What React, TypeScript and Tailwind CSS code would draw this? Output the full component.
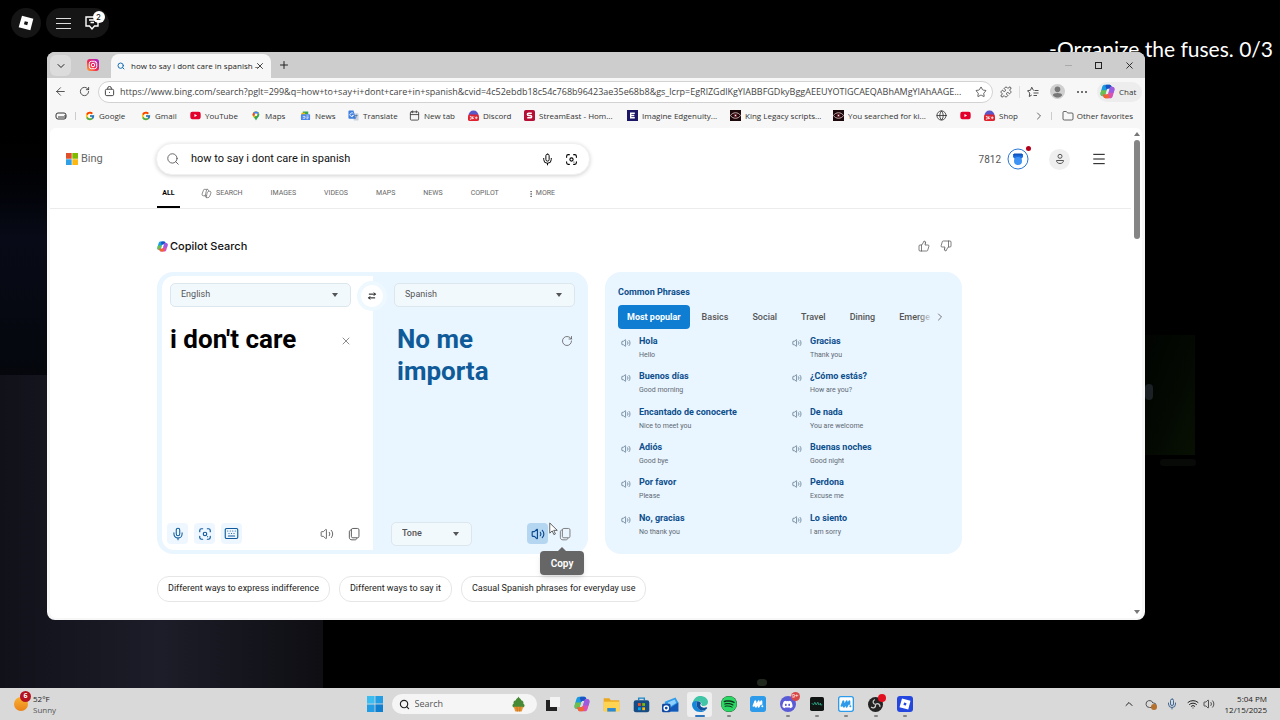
import { useState } from "react";
import type { ReactNode } from "react";
import { ArrowLeft, Calendar, ChevronDown, ChevronRight, ChevronUp, Cloud, Folder, Globe, Keyboard, Menu, Mic, MoreVertical, Plus, Puzzle, RotateCw, Search, Star, ThumbsDown, ThumbsUp, Volume2, Wifi, X } from "lucide-react";
import { FcGoogle } from "react-icons/fc";
import { FaDiscord, FaSpotify, FaYoutube } from "react-icons/fa";

const PHRASES = [
  ["Hola", "Hello"],
  ["Gracias", "Thank you"],
  ["Buenos días", "Good morning"],
  ["¿Cómo estás?", "How are you?"],
  ["Encantado de conocerte", "Nice to meet you"],
  ["De nada", "You are welcome"],
  ["Adiós", "Good bye"],
  ["Buenas noches", "Good night"],
  ["Por favor", "Please"],
  ["Perdona", "Excuse me"],
  ["No, gracias", "No thank you"],
  ["Lo siento", "I am sorry"],
];

const CATEGORIES = ["Most popular", "Basics", "Social", "Travel", "Dining", "Emerge"];

const SUGGESTIONS = [
  "Different ways to express indifference",
  "Different ways to say it",
  "Casual Spanish phrases for everyday use",
];

const PAGE_URL =
  "https://www.bing.com/search?pglt=299&q=how+to+say+i+dont+care+in+spanish&cvid=4c52ebdb18c54c768b96423ae35e68b8&gs_lcrp=EgRlZGdlKgYIABBFGDkyBggAEEUYOTIGCAEQABhAMgYIAhAAGE...";

function CopilotLogo({ className }: { className: string }) {
  return (
    <svg viewBox="1 1 22 22" className={className} aria-hidden="true">
      <path d="M8 2h7c2 0 2.500 1.500 3 3l.8 2.500h-5c-2 0-2.800 1-3.400 3L8.500 17c-.5 1.500-1.300 2-2.700 2-3.500 0-4.800-2-3.800-5.500l2.200-8C5 3 6 2 8 2Z" fill="#1a9be0" />
      <path d="M15 2c2 0 2.500 1.500 3 3l.8 2.500h-5c-1.600 0-2.400.7-3 2L9 4c.4-1.300 1-2 2.500-2Z" fill="#1b53c6" />
      <path d="M2 13.500 3 10h7.600l-2.100 7c-.5 1.500-1.300 2-2.700 2-3.500 0-4.800-2-3.800-5.500Z" fill="#6cc04a" />
      <path d="M16 22H9c-2 0-2.500-1.500-3-3l-.8-2.500h5c2 0 2.800-1 3.400-3L15.500 7c.5-1.500 1.300-2 2.700-2 3.500 0 4.800 2 3.800 5.500l-2.200 8C19 21 18 22 16 22Z" fill="#d951b4" />
      <path d="M9 22c-2 0-2.500-1.500-3-3l-.8-2.500h5c1.600 0 2.400-.7 3-2L15 20c-.4 1.300-1 2-2.500 2Z" fill="#f0642f" />
      <path d="M22 10.500 21 14h-7.600l2.100-7c.5-1.500 1.300-2 2.700-2 3.500 0 4.800 2 3.800 5.500Z" fill="#9b5de0" />
    </svg>
  );
}

function RobloxLogo({ className }: { className: string }) {
  return (
    <svg viewBox="0 0 24 24" className={className} aria-hidden="true">
      <path fillRule="evenodd" d="M6 1 23 5.500 18.500 23 1 18.500Zm4.200 8.200-1.300 4.700 4.900 1.300 1.300-4.700Z" fill="currentColor" />
    </svg>
  );
}

function InstagramLogo() {
  return (
    <svg viewBox="0 0 24 24" className="size-3" aria-hidden="true">
      <defs>
        <linearGradient id="insta" x1="0" y1="1" x2="1" y2="0">
          <stop offset="0" stopColor="#ffb13b" />
          <stop offset="0.45" stopColor="#f1244f" />
          <stop offset="1" stopColor="#a01fe0" />
        </linearGradient>
      </defs>
      <rect width="24" height="24" rx="6" fill="url(#insta)" />
      <rect x="4.500" y="4.500" width="15" height="15" rx="4.500" fill="none" stroke="#fff" strokeWidth="2" />
      <circle cx="12" cy="12" r="3.500" fill="none" stroke="#fff" strokeWidth="2" />
      <circle cx="16.500" cy="7.500" r="1.200" fill="#fff" />
    </svg>
  );
}

function VisualSearchIcon({ className }: { className: string }) {
  return (
    <svg viewBox="0 0 24 24" className={className} fill="none" stroke="currentColor" strokeWidth="2" strokeLinecap="round" aria-hidden="true">
      <path d="M3 8V6a3 3 0 0 1 3-3h2M16 3h2a3 3 0 0 1 3 3v2M21 16v2a3 3 0 0 1-3 3h-2M8 21H6a3 3 0 0 1-3-3v-2" />
      <circle cx="12" cy="12" r="3" />
      <path d="M16.500 16.500v.1" />
    </svg>
  );
}

function CopyIcon() {
  return (
    <svg viewBox="0 0 24 24" className="size-[14px]" fill="none" stroke="currentColor" strokeWidth="1.600" aria-hidden="true">
      <rect x="7.500" y="2.500" width="13" height="16" rx="2.500" />
      <path d="M7.500 5C5 5.200 4 6.500 4 8.500v9c0 3 1.500 4.500 4.500 4.500h5c2 0 3.300-1 3.500-3.500" />
    </svg>
  );
}

function SwapIcon() {
  return (
    <svg viewBox="0 0 16 16" className="size-[10px]" fill="none" stroke="currentColor" strokeWidth="1.500" aria-hidden="true">
      <path d="M3 5h10.500M11 2.500 13.500 5 11 7.500M13 11H2.500M5 8.500 2.500 11 5 13.500" />
    </svg>
  );
}

function MicrosoftSquares() {
  return (
    <svg viewBox="0 0 12 12" className="size-3" aria-hidden="true">
      <path d="M0 0h5.700v5.700H0z" fill="#e0502b" />
      <path d="M6.300 0H12v5.700H6.300z" fill="#7fba00" />
      <path d="M0 6.300h5.700V12H0z" fill="#2f9fe6" />
      <path d="M6.300 6.300H12V12H6.300z" fill="#fdb913" />
    </svg>
  );
}

function DiscordBadge() {
  return (
    <svg viewBox="0 0 24 24" className="size-[11px]" aria-hidden="true">
      <path d="M1 12a11 11 0 0 1 22 0Z" fill="#5b57c8" />
      <rect x="0" y="10" width="24" height="14" rx="4" fill="#e0222f" />
      <path d="M4 14h3v6H4M10 14v6m0-3 3-3m-3 3 3 3M18 14v6m-3-3h6" stroke="#fff" strokeWidth="1.800" fill="none" />
    </svg>
  );
}

function EyeIcon() {
  return (
    <svg viewBox="0 0 24 24" className="size-[11px]" aria-hidden="true">
      <rect width="24" height="24" fill="#1d090c" />
      <path d="M1 12C6 4 18 4 23 12 18 20 6 20 1 12Z" fill="none" stroke="#d9b9b9" strokeWidth="2" />
      <circle cx="12" cy="12" r="4" fill="#7a2630" />
      <circle cx="12" cy="12" r="1.500" fill="#fff" />
    </svg>
  );
}

const BOOKMARKS: { label: string; icon: ReactNode }[] = [
  { label: "Google", icon: <FcGoogle className="size-[10px]" /> },
  { label: "Gmail", icon: <FcGoogle className="size-[10px]" /> },
  { label: "YouTube", icon: <FaYoutube className="size-[11px] text-[#e3002b]" /> },
  {
    label: "Maps",
    icon: (
      <svg viewBox="0 0 24 24" className="size-[10px]" aria-hidden="true">
        <path d="M12 1a8 8 0 0 1 8 8c0 5-6 8-8 14C10 17 4 14 4 9a8 8 0 0 1 8-8Z" fill="#34a853" />
        <path d="M12 1a8 8 0 0 1 7 4.200L7 16C5 13.500 4 11.500 4 9a8 8 0 0 1 8-8Z" fill="#fbbc04" />
        <path d="M12 1a8 8 0 0 0-6 2.700L12 9l7-4A8 8 0 0 0 12 1Z" fill="#4285f4" />
        <path d="M6 3.700A8 8 0 0 0 4.500 12L12 9Z" fill="#ea4335" />
        <circle cx="12" cy="9" r="3" fill="#fff" />
      </svg>
    ),
  },
  {
    label: "News",
    icon: (
      <svg viewBox="0 0 24 24" className="size-[11px]" aria-hidden="true">
        <path d="M6 3h12v6H6z" fill="#34a853" />
        <path d="M3 6h8v5H3z" fill="#fbbc04" />
        <rect x="2" y="9" width="20" height="13" rx="2" fill="#4a86e8" />
        <path d="M6 14h5v4H6M14 13h5M14 16h5M14 19h4" stroke="#fff" strokeWidth="1.500" fill="none" />
      </svg>
    ),
  },
  {
    label: "Translate",
    icon: (
      <svg viewBox="0 0 24 24" className="size-[11px]" aria-hidden="true">
        <path d="M8 7h13a2 2 0 0 1 2 2v12a2 2 0 0 1-2 2h-8Z" fill="#c9d3df" />
        <path d="M3 1h9l5 18H3a2 2 0 0 1-2-2V3a2 2 0 0 1 2-2Z" fill="#3f7fe0" />
        <path d="M12 8.500A4 4 0 1 0 12 12H8.500" stroke="#fff" strokeWidth="1.800" fill="none" />
        <path d="M15 12h6M18 10v3c0 3-2 5-3 6" stroke="#55708f" strokeWidth="1.600" fill="none" />
      </svg>
    ),
  },
  { label: "New tab", icon: <Calendar className="size-[11px] text-[#444]" /> },
  { label: "Discord", icon: <DiscordBadge /> },
  {
    label: "StreamEast - Hom...",
    icon: (
      <svg viewBox="0 0 24 24" className="size-[11px]" aria-hidden="true">
        <rect width="24" height="24" rx="4" fill="#b50f35" />
        <path d="M17 7H10a2.500 2.500 0 0 0 0 5h4a2.500 2.500 0 0 1 0 5H7" fill="none" stroke="#fff" strokeWidth="3.500" />
      </svg>
    ),
  },
  {
    label: "Imagine Edgenuity...",
    icon: (
      <svg viewBox="0 0 24 24" className="size-[11px]" aria-hidden="true">
        <rect width="24" height="24" fill="#1c1666" />
        <path d="M17 7H8v10h9M8 12h8" fill="none" stroke="#fff" strokeWidth="3" />
      </svg>
    ),
  },
  { label: "King Legacy scripts...", icon: <EyeIcon /> },
  { label: "You searched for ki...", icon: <EyeIcon /> },
];

const BOOKMARK_SPOTS = [
  "w-[56px]", "w-[49px]", "w-[61px]", "w-[49px]", "w-[48px]", "w-[61px]",
  "w-[59px]", "w-[56px]", "w-[103px]", "w-[103px]", "w-[103px]", "w-[103px]",
];

function TitleBar() {
  return (
    <div className="flex h-[26px] items-end bg-[#cdcdcd] pl-[3px] text-[#222]">
      <button aria-label="Search tabs" className="mb-[2px] flex h-[21px] w-[21px] items-center justify-center rounded-md bg-[#dcdcdc]">
        <ChevronDown className="size-3" strokeWidth={2} />
      </button>
      <button aria-label="Instagram tab" className="mr-[3px] ml-[7px] flex h-[26px] w-[30px] items-center justify-center">
        <InstagramLogo />
      </button>
      <div className="flex h-6 w-[160px] items-center rounded-t-lg bg-[#f7f7f7] pr-[5px] pl-[6px]">
        <Search className="size-2 shrink-0 text-[#176fb5]" strokeWidth={3} />
        <span className="ml-[6px] min-w-0 flex-1 text-[8px] whitespace-nowrap">how to say i dont care in spanish –</span>
        <button aria-label="Close tab" className="flex size-3 items-center justify-center">
          <X className="size-[10px]" strokeWidth={2} />
        </button>
      </div>
      <button aria-label="New tab" className="ml-[6px] flex h-[26px] w-[13px] items-center justify-center">
        <Plus className="size-3 shrink-0" strokeWidth={2} />
      </button>
      <div className="ml-auto flex h-[26px] items-center pr-[1px]">
        <button aria-label="Minimize" className="flex w-[30px] justify-center text-[#aaa]">
          <span className="h-px w-[7px] bg-current" />
        </button>
        <button aria-label="Maximize" className="flex w-[31px] justify-center">
          <span className="size-[7px] border border-current" />
        </button>
        <button aria-label="Close" className="flex w-[30px] justify-center">
          <X className="size-[11px]" strokeWidth={2} />
        </button>
      </div>
    </div>
  );
}

function AddressRow() {
  return (
    <div className="flex h-[27px] items-center pr-[3px] pl-[7px] text-[#333]">
      <button aria-label="Back" className="flex w-3 justify-center">
        <ArrowLeft className="size-[13px] shrink-0" strokeWidth={1.5} />
      </button>
      <button aria-label="Reload" className="ml-3 flex w-3 justify-center">
        <RotateCw className="size-[11px]" strokeWidth={1.8} />
      </button>
      <div className="ml-2 flex h-[22px] min-w-0 flex-1 items-center rounded-full border border-[#d2d2d2] bg-white pr-[5px] pl-[5px]">
        <svg viewBox="0 0 24 24" className="size-[11px] shrink-0" fill="none" stroke="currentColor" strokeWidth="2" aria-hidden="true">
          <rect x="3" y="7" width="18" height="14" rx="3" />
          <path d="M8 7V5a4 4 0 0 1 8 0v2M12 13v2" />
        </svg>
        <input aria-label="Address" defaultValue={PAGE_URL} className="ml-[5px] min-w-0 flex-1 bg-transparent text-[9px] text-[#444] outline-none" />
        <button aria-label="Favorite this page">
          <Star className="size-3" strokeWidth={1.5} />
        </button>
      </div>
      <button aria-label="Extensions" className="ml-[7px]">
        <Puzzle className="size-3" strokeWidth={1.5} />
      </button>
      <span className="ml-[7px] h-3 w-px bg-[#ddd]" />
      <button aria-label="Favorites" className="ml-[7px]">
        <svg viewBox="0 0 24 24" className="size-3" fill="none" stroke="currentColor" strokeWidth="1.700" strokeLinejoin="round" aria-hidden="true">
          <path d="M13 9 9.500 2.500 7 8.500 1 9.500l4.500 4.500-1 7 5-3M15 9h8M13 14h10M13 19h7" />
        </svg>
      </button>
      <button aria-label="Profile" className="ml-[11px]">
        <svg viewBox="0 0 24 24" className="size-[15px]" aria-hidden="true">
          <circle cx="12" cy="12" r="12" fill="#cfcfcf" />
          <circle cx="12" cy="8.500" r="4.500" fill="#777" />
          <path d="M4.500 18c0-5 15-5 15 0-4 5-11 5-15 0Z" fill="#777" />
        </svg>
      </button>
      <button aria-label="Settings and more" className="ml-3 flex gap-[2px]">
        <span className="size-[2px] rounded-full bg-[#444]" />
        <span className="size-[2px] rounded-full bg-[#444]" />
        <span className="size-[2px] rounded-full bg-[#444]" />
      </button>
      <button className="ml-[10px] flex h-5 w-[45px] items-center gap-1 rounded-full bg-[#ededed] pl-[3px] text-[8px]">
        <CopilotLogo className="size-[15px] shrink-0" />
        Chat
      </button>
    </div>
  );
}

function BookmarksBar() {
  return (
    <nav className="flex h-[23px] items-center pr-3 pb-[2px] pl-2 text-[8px] text-[#333]">
      <svg viewBox="0 0 24 24" className="size-3 shrink-0" fill="none" stroke="currentColor" strokeWidth="2" aria-hidden="true">
        <rect x="2" y="6" width="20" height="12" rx="4" />
        <path d="M6 14h12M20 10v6" />
      </svg>
      <span className="mr-[9px] ml-2 h-2 w-px bg-[#ccc]" />
      {BOOKMARKS.map((mark, i) => (
        <a key={mark.label} href="#" className={`flex shrink-0 items-center gap-1 whitespace-nowrap ${BOOKMARK_SPOTS[i]}`}>
          <span className="shrink-0">{mark.icon}</span>
          {mark.label}
        </a>
      ))}
      <a href="#" aria-label="Website"><Globe className="size-[11px]" strokeWidth={1.8} /></a>
      <a href="#" aria-label="YouTube" className="ml-[13px]"><FaYoutube className="size-[11px] text-[#e3002b]" /></a>
      <a href="#" className="ml-[13px] flex items-center gap-1">
        <DiscordBadge />
        Shop
      </a>
      <button aria-label="More favorites" className="ml-auto">
        <ChevronRight className="size-3" strokeWidth={1.5} />
      </button>
      <span className="mr-[10px] ml-[6px] h-2 w-px bg-[#ccc]" />
      <button className="flex items-center gap-[3px] whitespace-nowrap">
        <Folder className="size-3" strokeWidth={1.5} />
        Other favorites
      </button>
    </nav>
  );
}

function BingHeader() {
  return (
    <header className="border-b border-[#ececec] pt-[15px]">
      <div className="flex h-8 items-center pr-6 pl-4">
        <a href="#" className="flex w-[90px] shrink-0 items-center gap-[3px] text-[11px] text-[#666]">
          <MicrosoftSquares />
          Bing
        </a>
        <form className="flex h-8 w-[434px] items-center rounded-full border border-[#f0f0f0] bg-white pr-[11px] pl-[9px] shadow-[0_1px_4px_rgba(0,0,0,0.18)]" onSubmit={(e) => e.preventDefault()}>
          <button aria-label="Search" className="text-[#555]">
            <Search className="size-[14px]" strokeWidth={1.5} />
          </button>
          <input aria-label="Search query" defaultValue="how to say i dont care in spanish" className="ml-[11px] min-w-0 flex-1 bg-transparent text-[11px] text-[#111] outline-none" />
          <button type="button" aria-label="Search by voice">
            <Mic className="size-[13px]" strokeWidth={1.8} />
          </button>
          <button type="button" aria-label="Search by image" className="ml-[11px]">
            <VisualSearchIcon className="size-[13px]" />
          </button>
        </form>
        <div className="ml-auto flex items-center text-[10px] text-[#555]">
          <span>7812</span>
          <button aria-label="Rewards" className="relative ml-[6px]">
            <svg viewBox="0 0 22 22" className="size-[22px]" aria-hidden="true">
              <circle cx="11" cy="11" r="10" fill="#fff" stroke="#2b77d4" />
              <path d="M6 6h10v3l-2 2H8L6 9Z" fill="#1c6fe0" />
              <circle cx="11" cy="13" r="4" fill="#3f93f5" />
              <path d="M7 5.500h8v2H7z" fill="#0f55bd" />
            </svg>
            <span className="absolute -top-[2px] -right-[2px] size-[5px] rounded-full bg-[#b3001b]" />
          </button>
          <button aria-label="Account" className="ml-5 flex size-[21px] items-center justify-center rounded-full bg-[#efefef]">
            <svg viewBox="0 0 12 12" className="size-3" fill="none" stroke="currentColor" aria-hidden="true">
              <circle cx="6" cy="3.300" r="2" />
              <path d="M2.500 7.500h7c0 4-7 4-7 0Z" />
            </svg>
          </button>
          <button aria-label="Menu" className="ml-[21px] text-[#111]">
            <Menu className="size-4" strokeWidth={1.5} />
          </button>
        </div>
      </div>
      <nav className="mt-1 ml-[107px] flex h-[29px] items-stretch text-[7px] text-[#666]">
        <a href="#" className="mr-[21px] flex w-[23px] items-center justify-center border-b-2 border-black pt-[2px] font-bold text-black">ALL</a>
        <a href="#" className="mr-7 flex items-center gap-1">
          <svg viewBox="0 0 24 24" className="size-[11px]" fill="none" stroke="currentColor" strokeWidth="1.600" aria-hidden="true">
            <path d="M7 3h7c2 0 2 2 3 4h2c3 0 3 3 2 6l-2 5c-1 2-2 3-4 3h-3c-2 0-2-2-3-4H5c-3 0-3-3-2-6l2-5c.5-2 1-3 2-3Z" />
            <path d="M14 3c-3 1-3 8-5 14M17 7c-5 0-5 14-5 14M9 17h4" />
          </svg>
          SEARCH
        </a>
        <a href="#" className="mr-7 flex items-center">IMAGES</a>
        <a href="#" className="mr-7 flex items-center">VIDEOS</a>
        <a href="#" className="mr-7 flex items-center">MAPS</a>
        <a href="#" className="mr-7 flex items-center">NEWS</a>
        <a href="#" className="mr-7 flex items-center">COPILOT</a>
        <button className="flex items-center gap-px">
          <MoreVertical className="size-2" strokeWidth={2.5} />
          MORE
        </button>
      </nav>
    </header>
  );
}

function Dropdown({ label, options, className }: { label: string; options: string[]; className: string }) {
  return (
    <div className={`relative flex h-6 items-center rounded-[5px] border border-[#dce6ed] bg-[#f2f9fd] text-[9px] text-[#555] ${className}`}>
      <select aria-label={label} className="h-full w-full appearance-none bg-transparent px-[10px] outline-none">
        {options.map((option) => <option key={option}>{option}</option>)}
      </select>
      <span className="pointer-events-none absolute right-3 border-x-3 border-t-4 border-x-transparent border-t-[#555]" />
    </div>
  );
}

function ToolButton({ label, className = "", children }: { label: string; className?: string; children: ReactNode }) {
  return (
    <button aria-label={label} className={`flex size-[21px] items-center justify-center rounded-[4px] ${className}`}>
      {children}
    </button>
  );
}

function Translator() {
  const [source, setSource] = useState("i don't care");

  return (
    <section className="relative flex h-[282px] w-[431px] shrink-0 rounded-2xl bg-[#e9f5ff] py-1 pl-[5px]">
      <div className="flex w-[211px] flex-col rounded-l-xl bg-white pt-[7px] pb-[6px]">
        <Dropdown label="Source language" options={["English", "Spanish", "French"]} className="ml-2 w-[181px]" />
        <div className="mt-4 flex flex-1 items-start pr-[21px] pl-2">
          <textarea
            aria-label="Text to translate"
            value={source}
            onChange={(e) => setSource(e.target.value)}
            className="h-full min-w-0 flex-1 resize-none bg-transparent text-[26px] leading-8 font-bold text-black outline-none"
          />
          <button aria-label="Clear text" className="mt-3 text-[#666]" onClick={() => setSource("")}>
            <X className="size-3" strokeWidth={1.5} />
          </button>
        </div>
        <div className="flex items-center gap-[6px] px-[5px] text-[#0e5a9c]">
          <ToolButton label="Speak" className="bg-[#eef7ff]"><Mic className="size-[14px]" strokeWidth={1.800} /></ToolButton>
          <ToolButton label="Translate image" className="bg-[#eef7ff]"><VisualSearchIcon className="size-[14px]" /></ToolButton>
          <ToolButton label="Keyboard" className="bg-[#eef7ff]"><Keyboard className="size-[15px]" strokeWidth={1.800} /></ToolButton>
          <ToolButton label="Listen to source" className="ml-auto text-[#555]"><Volume2 className="size-[14px]" strokeWidth={1.500} /></ToolButton>
          <ToolButton label="Copy source" className="mr-1 text-[#555]"><CopyIcon /></ToolButton>
        </div>
      </div>

      <div className="flex flex-1 flex-col pt-[7px] pb-[6px]">
        <Dropdown label="Target language" options={["Spanish", "English", "French"]} className="ml-[21px] w-[181px]" />
        <div className="mt-4 flex flex-1 items-start justify-between pr-[15px] pl-6">
          <p className="w-[120px] text-[26px] leading-8 font-bold text-[#0f5a98]">No me importa</p>
          <button aria-label="Regenerate" className="mt-3 text-[#555]">
            <RotateCw className="size-3" strokeWidth={1.5} />
          </button>
        </div>
        <div className="flex h-[21px] items-center pr-[13px] pl-[18px]">
          <Dropdown label="Tone" options={["Tone", "Casual", "Formal"]} className="w-[81px] font-medium" />
          <ToolButton label="Listen to translation" className="ml-auto bg-[#b5d6f1] text-[#0b4a91]"><Volume2 className="size-[14px]" strokeWidth={2} /></ToolButton>
          <div className="relative ml-[6px]">
            <ToolButton label="Copy" className="text-[#777]"><CopyIcon /></ToolButton>
            <div role="tooltip" className="absolute top-[28px] -left-[14px] z-10 flex h-6 w-[44px] items-center justify-center rounded-[4px] bg-[#666] text-[10px] font-semibold text-white shadow-md">
              Copy
              <span className="absolute -top-1 border-x-4 border-b-4 border-x-transparent border-b-[#666]" />
            </div>
          </div>
        </div>
      </div>

      {/* swap button straddles the two panes */}
      <button aria-label="Swap languages" className="absolute top-[9px] left-[200px] flex size-[30px] items-center justify-center rounded-full border-4 border-[#eef8ff] bg-white text-black">
        <SwapIcon />
      </button>

      <svg viewBox="0 0 12 18" className="absolute top-[250px] left-[392px] h-[14px] w-[9px]" aria-hidden="true">
        <path d="M1 1v13.500l3.300-3 2.200 5 2-.9-2.200-4.800H11Z" fill="#fff" stroke="#333" />
      </svg>
    </section>
  );
}

function CommonPhrases() {
  const [active, setActive] = useState("Most popular");

  return (
    <section className="flex h-[282px] w-[357px] shrink-0 flex-col rounded-2xl bg-[#e9f5ff] pt-[13px] pl-[13px]">
      <h3 className="text-[9px] leading-[14px] font-bold text-[#0d4f8c]">Common Phrases</h3>
      <div className="mt-[6px] flex items-center">
        <div className="relative flex w-[315px] overflow-hidden text-[9px] font-medium text-[#555]">
          {CATEGORIES.map((category) => (
            <button
              key={category}
              onClick={() => setActive(category)}
              className={category === active ? "h-6 shrink-0 rounded-[4px] bg-[#0f7dd1] px-[9px] pt-px font-bold text-white" : "h-6 shrink-0 px-3 pt-px"}
            >
              {category}
            </button>
          ))}
          <span className="pointer-events-none absolute top-0 right-0 h-full w-4 bg-linear-to-r from-transparent to-[#e9f5ff]" />
        </div>
        <button aria-label="Next categories" className="ml-px text-[#666]">
          <ChevronRight className="size-3" strokeWidth={1.800} />
        </button>
      </div>
      <ul className="mt-[5px] grid h-[212px] grid-cols-[171px_1fr] grid-rows-6">
        {PHRASES.map(([phrase, meaning]) => (
          <li key={phrase} className="flex items-start pl-[3px]">
            <button aria-label={`Listen to ${phrase}`} className="mt-1 mr-2 text-[#556f85]">
              <Volume2 className="size-[10px]" strokeWidth={1.800} />
            </button>
            <div>
              <p className="text-[9px] leading-[14px] font-bold text-[#0d4f8c]">{phrase}</p>
              <p className="mt-px text-[7px] leading-3 text-[#5f6a73]">{meaning}</p>
            </div>
          </li>
        ))}
      </ul>
    </section>
  );
}

function BrowserWindow() {
  return (
    <div className="z-10 mr-[135px] ml-[47px] overflow-hidden rounded-lg bg-[#f7f7f7] font-['Open_Sans',sans-serif]">
      <TitleBar />
      <AddressRow />
      <BookmarksBar />
      <div className="mr-[3px] mb-[2px] ml-[3px] flex overflow-hidden rounded-md bg-white font-['Roboto',sans-serif]">
        <div className="min-w-0 flex-1">
          <BingHeader />
          <main className="pt-[27px] pb-4 pl-[107px]">
            <div className="flex h-5 w-[795px] items-center">
              <CopilotLogo className="size-[11px]" />
              <h2 className="ml-[2px] font-['Inter',sans-serif] text-[11px] font-medium text-[#111]">Copilot Search</h2>
              <button aria-label="Like" className="ml-auto text-[#555]"><ThumbsUp className="size-3" strokeWidth={1.500} /></button>
              <button aria-label="Dislike" className="ml-[10px] text-[#555]"><ThumbsDown className="size-3" strokeWidth={1.500} /></button>
            </div>
            <div className="mt-4 flex gap-[17px]">
              <Translator />
              <CommonPhrases />
            </div>
            <div className="mt-[22px] flex gap-[9px] text-[9px] text-[#222]">
              {SUGGESTIONS.map((text) => (
                <button key={text} className="h-[26px] rounded-xl border border-[#e6e6e6] px-[10px] whitespace-nowrap">{text}</button>
              ))}
            </div>
          </main>
        </div>
        <div className="flex w-[11px] flex-col items-center justify-between pt-1 pb-1">
          <div className="flex flex-col items-center gap-1">
            <span className="border-x-3 border-b-4 border-x-transparent border-b-[#777]" />
            <span className="h-[99px] w-[6px] rounded-full bg-[#858585]" />
          </div>
          <span className="border-x-3 border-t-4 border-x-transparent border-t-[#777]" />
        </div>
      </div>
    </div>
  );
}

function TaskIcon({ label, running, active, children }: { label: string; running?: boolean; active?: boolean; children: ReactNode }) {
  return (
    <button aria-label={label} className="relative flex h-8 min-w-[29px] items-center justify-center">
      <span className={active ? "flex size-[25px] items-center justify-center rounded-[3px] bg-[#efefef]" : "flex"}>{children}</span>
      {running && <span className={active ? "absolute bottom-[3px] h-[2px] w-[10px] rounded-full bg-[#2f75bd]" : "absolute bottom-[3px] h-[2px] w-1 rounded-full bg-[#858585]"} />}
    </button>
  );
}

function MedalApp({ light }: { light?: boolean }) {
  return (
    <svg viewBox="0 0 24 24" className="size-4" aria-hidden="true">
      <rect x="1" y="1" width="22" height="22" rx="3" fill={light ? "#fff" : "#2d9bea"} stroke="#2d9bea" strokeWidth="2" />
      <path d="m5 16 3-8 1 8 4-8 0 8 4-8v5" fill="none" stroke={light ? "#2d9bea" : "#fff"} strokeWidth="3" strokeLinejoin="round" />
      <circle cx="18.500" cy="15.500" r="1.500" fill={light ? "#2d9bea" : "#fff"} />
    </svg>
  );
}

function Taskbar() {
  return (
    <footer className="z-10 grid h-8 grid-cols-[1fr_auto_1fr] items-center bg-[#d9d9d9] font-['Open_Sans',sans-serif] text-[#222]">
      <button className="flex items-center pl-[14px] text-left text-[8px]">
        <span className="relative mr-[5px] size-[14px] rounded-full bg-linear-to-b from-[#f9b233] to-[#e98216]">
          <span className="absolute -top-[6px] left-[6px] flex size-[11px] items-center justify-center rounded-full bg-[#b5121f] text-[7px] font-bold text-white">6</span>
        </span>
        <span className="leading-[11px]">52°F<br /><span className="text-[#555]">Sunny</span></span>
      </button>
      <div className="flex items-center">
        <TaskIcon label="Start">
          <svg viewBox="0 0 16 16" className="size-4" aria-hidden="true">
            <path d="M0 0h7.600v7.600H0z" fill="#3cbdf0" />
            <path d="M8.400 0H16v7.600H8.400zM0 8.400h7.600V16H0z" fill="#239de3" />
            <path d="M8.400 8.400H16V16H8.400z" fill="#0f7fd0" />
          </svg>
        </TaskIcon>
        <label className="mx-[2px] flex h-5 w-[145px] items-center rounded-full bg-[#f5f5f5] pr-3 pl-[7px]">
          <Search className="size-[11px] shrink-0" strokeWidth={2.5} />
          <input type="search" placeholder="Search" className="ml-[5px] min-w-0 flex-1 bg-transparent text-[9px] outline-none placeholder:text-[#555]" />
          <svg viewBox="0 0 24 30" className="h-4 w-[13px] shrink-0" aria-hidden="true">
            <path d="M12 1c1 4 5 4 5 7 4 1 5 4 4 6 3 2 3 5 1 7H2c-2-2-2-5 1-7-1-3 0-5 4-6 0-3 4-3 5-7Z" fill="#468a35" />
            <path d="M3 20h18l-3 9H6Z" fill="#e79231" />
            <path d="m9 20 1 9M15 20l-1 9" stroke="#a95a18" />
          </svg>
        </label>
        <div className="grid w-[381px] grid-cols-13">
          <TaskIcon label="Task view">
            <svg viewBox="0 0 16 16" className="size-4" aria-hidden="true">
              <path d="M5 1h10v10H5z" fill="#f3f3f3" />
              <path d="M1 4h4v7h7v4H1z" fill="#222" />
            </svg>
          </TaskIcon>
          <TaskIcon label="Copilot"><CopilotLogo className="size-4" /></TaskIcon>
          <TaskIcon label="File Explorer">
            <svg viewBox="0 0 24 24" className="size-[17px]" aria-hidden="true">
              <path d="M1 3h8l2 3h12v15H1Z" fill="#e9a820" />
              <path d="M1 8h22v14H1Z" fill="#ffd352" />
              <path d="M6 17h12v5H6Z" fill="#2a8ad8" />
            </svg>
          </TaskIcon>
          <TaskIcon label="Microsoft Store">
            <svg viewBox="0 0 24 24" className="size-[17px]" aria-hidden="true">
              <path d="M8 6V3h8v3" fill="none" stroke="#1d87c9" strokeWidth="2" />
              <rect x="1" y="6" width="22" height="17" rx="3" fill="#164c86" />
              <path d="M7 10h4v4H7z" fill="#f25022" />
              <path d="M13 10h4v4h-4z" fill="#7fba00" />
              <path d="M7 16h4v4H7z" fill="#00a4ef" />
              <path d="M13 16h4v4h-4z" fill="#ffb900" />
            </svg>
          </TaskIcon>
          <TaskIcon label="Outlook">
            <svg viewBox="0 0 24 24" className="size-[17px]" aria-hidden="true">
              <path d="M4 8 19 2l4 7v13H4Z" fill="#2f9bea" />
              <path d="m4 22 19-13v13Z" fill="#1459b7" />
              <path d="m8 9 10-4 2 5-9 5Z" fill="#8fd0ff" />
              <rect x="0" y="11" width="12" height="12" rx="2" fill="#124aa3" />
              <circle cx="6" cy="17" r="3" fill="none" stroke="#fff" strokeWidth="2" />
            </svg>
          </TaskIcon>
          <TaskIcon label="Edge" running active>
            <svg viewBox="0 0 24 24" className="size-4" aria-hidden="true">
              <path d="M1 11C2 4 7 0 12 0c7 0 12 4 12 9 0 4-3 6-7 6-2 0-3-1-3-2 1-4-3-6-6-5-4 0-6 2-7 3Z" fill="#40c5a6" />
              <path d="M0 12c1-4 5-5 8-4-3 5 0 12 6 14 3 0 6-1 8-3-3 4-6 5-10 5C5 24 0 19 0 12Z" fill="#1687d8" />
              <path d="M8 8c4 0 6 2 6 5-2 2 2 5 8 4l1 1c-3 4-6 4-9 4-6-2-9-9-6-14Z" fill="#0f4f9c" />
              <path d="M14 10c1 1-1 3 0 4s3 2 6 1v2c-6 1-10-3-6-7Z" fill="#eee" />
            </svg>
          </TaskIcon>
          <TaskIcon label="Spotify" running><span className="rounded-full bg-[#10351c]"><FaSpotify className="size-4 text-[#2bd865]" /></span></TaskIcon>
          <TaskIcon label="Medal"><MedalApp /></TaskIcon>
          <TaskIcon label="Discord" running>
            <span className="relative flex size-4 items-center justify-center rounded-full bg-[#5a5bd6]">
              <FaDiscord className="size-[11px] text-white" />
              <span className="absolute -top-1 -right-1 flex size-[9px] items-center justify-center rounded-full bg-[#d94848] text-[6px] text-white">9+</span>
            </span>
          </TaskIcon>
          <TaskIcon label="Audio mixer" running>
            <svg viewBox="0 0 16 16" className="size-[14px]" aria-hidden="true">
              <rect width="16" height="16" rx="2" fill="#101514" />
              <path d="m2 7 2 2 1.500-3L7 9l2-3 1 3 2-2v2h2" fill="none" stroke="#2fa98a" />
            </svg>
          </TaskIcon>
          <TaskIcon label="Medal clip" running><MedalApp light /></TaskIcon>
          <TaskIcon label="OBS Studio" running>
            <span className="relative flex">
              <svg viewBox="0 0 24 24" className="size-[15px]" aria-hidden="true">
                <circle cx="12" cy="12" r="12" fill="#232323" />
                <path d="M12 12c-5-1-5-6-1-8M12 12c1 5-4 7-7 4M12 12c4-3 8 0 7 4" fill="none" stroke="#ccc" strokeWidth="2" />
              </svg>
              <span className="absolute -top-[3px] -right-[3px] size-2 rounded-full bg-[#e3101f]" />
            </span>
          </TaskIcon>
          <TaskIcon label="Roblox" running>
            <span className="flex size-4 items-center justify-center rounded-[3px] bg-[#2447e0] text-white"><RobloxLogo className="size-3" /></span>
          </TaskIcon>
        </div>
      </div>
      <div className="flex items-center justify-end pr-[13px]">
        <button aria-label="Show hidden icons"><ChevronUp className="size-3" /></button>
        <span className="relative ml-[10px]">
          <Cloud className="size-3 text-[#555]" />
          <span className="absolute right-0 bottom-0 size-[6px] rounded-full bg-[#b5702b]" />
        </span>
        <Mic className="ml-[9px] size-3 text-[#3f6796]" />
        <Wifi className="ml-[9px] size-3" />
        <Volume2 className="ml-1 size-3" strokeWidth={1.500} />
        <time className="ml-[10px] text-right text-[8px] leading-[11px] whitespace-nowrap">5:04 PM<br />12/15/2025</time>
      </div>
    </footer>
  );
}

function GameBackdrop() {
  return (
    <div className="absolute inset-0" aria-hidden="true">
      <div className="absolute top-[100px] left-0 h-[275px] w-[60px] bg-linear-to-b from-black via-[#080b17] to-[#05070d]" />
      <div className="absolute top-[375px] bottom-8 left-0 w-[323px] bg-linear-to-r from-[#101119] via-[#1d1d29] to-[#0e0e13]" />
      <div className="absolute top-[335px] left-[1145px] h-[120px] w-[50px] bg-linear-to-br from-[#010401] to-[#081003]" />
      <span className="absolute top-[384px] left-[1145px] h-4 w-2 rounded-full bg-[#1b2124]" />
      <span className="absolute top-[459px] left-[1160px] h-[7px] w-9 rounded-full bg-[#080a08]" />
      <span className="absolute bottom-[34px] left-[757px] h-[7px] w-[10px] rounded-full bg-[#20271c]" />
    </div>
  );
}

export default function App() {
  return (
    <div className="relative flex min-h-screen flex-col overflow-hidden bg-black">
      <GameBackdrop />
      <div className="z-10 flex h-[52px] items-start gap-[5px] pt-2 pl-[11px] text-white">
        <button aria-label="Roblox menu" className="flex size-[30px] items-center justify-center rounded-full bg-[#151515]">
          <RobloxLogo className="size-4" />
        </button>
        <div className="flex h-[30px] w-[63px] items-center justify-center gap-[13px] rounded-full bg-[#151515]">
          <button aria-label="Open menu" className="flex w-[15px] flex-col gap-1">
            <span className="h-px bg-[#ddd]" />
            <span className="h-px bg-[#ddd]" />
            <span className="h-px bg-[#ddd]" />
          </button>
          <button aria-label="Chat" className="relative">
            <svg viewBox="0 0 16 16" className="size-4" fill="none" stroke="currentColor" strokeWidth="1.400" aria-hidden="true">
              <path d="M2 2h12v9h-3.500L8 14l-2.500-3H2ZM5 5h6M6.500 7.500H10" />
            </svg>
            <span className="absolute -top-1 left-[9px] flex size-3 items-center justify-center rounded-full bg-white font-['Inter',sans-serif] text-[8px] text-black">2</span>
          </button>
        </div>
      </div>
      <p className="absolute top-9 right-[7px] font-['Lato',sans-serif] text-[21px] leading-[26px] text-white">-Organize the fuses. 0/3</p>
      <BrowserWindow />
      <div className="flex-1" />
      <Taskbar />
    </div>
  );
}
